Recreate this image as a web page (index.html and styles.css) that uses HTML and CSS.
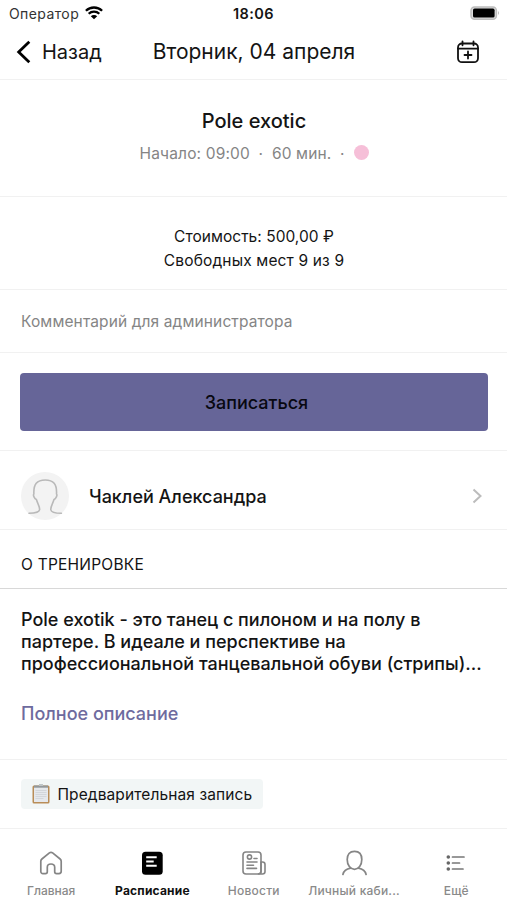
FILE: index.html
```html
<!DOCTYPE html>
<html lang="ru">
<head>
<meta charset="utf-8">
<title>Pole exotic</title>
<link rel="stylesheet" href="styles.css">
</head>
<body>
<div class="status">
  <div class="carrier"><span>Оператор</span>
    <svg width="18" height="14" viewBox="0 0 18 14"><path d="M.9 4.8a11.6 11.6 0 0 1 16.2 0M3.7 7.7a7.6 7.6 0 0 1 10.6 0" fill="none" stroke="#000" stroke-width="2.3"/><path d="M5.8 10.2a4.6 4.6 0 0 1 6.4 0L9 13.3z"/></svg>
  </div>
  <div class="time">18:06</div>
  <div class="battery">
    <svg width="30" height="14" viewBox="0 0 30 14"><rect x="1" y="1" width="25.400" height="12.200" rx="3.500" fill="#ddd" stroke="#bdbdbd" stroke-width="1.500"/><rect x="3" y="2.600" width="21.600" height="9" rx="1.600"/><path d="M28 4.700q1.800 2.300 0 4.600z" fill="#aaa"/></svg>
  </div>
</div>
<header class="nav">
  <div class="back"><svg width="16" height="24" viewBox="0 0 16 24"><path d="M13.300 1.800 2.700 12l10.600 10.200" fill="none" stroke="#000" stroke-width="2.800"/></svg><span>Назад</span></div>
  <h1>Вторник, 04 апреля</h1>
  <div class="calendar"><svg width="24" height="24" viewBox="0 0 24 24" fill="none" stroke="#111" stroke-width="1.800" stroke-linecap="round"><rect x="2" y="3.500" width="20" height="18.700" rx="4"/><path d="M2 8.700h20M6.500 1.300v4M17.500 1.300v4M12 11.500v7M8.500 15h7"/></svg></div>
</header>
<section class="summary">
  <h2>Pole exotic</h2>
  <div class="meta"><span class="start">Начало: 09:00</span><i>·</i><span>60 мин.</span><i>·</i><b class="dot"></b></div>
</section>
<section class="price"><div class="cost">Стоимость: 500,00 ₽</div><div class="seats">Свободных мест 9 из 9</div></section>
<section class="comment">Комментарий для администратора</section>
<section class="action"><div class="button">Записаться</div></section>
<section class="trainer">
  <div class="avatar"><svg width="48" height="48" viewBox="0 0 48 48" fill="none" stroke="#b9b9b9" stroke-width="1.600" stroke-linecap="round"><path d="M8 41.300c6-.1 10.300-1 10.600-3.600.3-3.200-1.800-5.500-3.200-10.200-1.900-.7-3.700-4.500-2.500-5.500C12.300 12 16 8 24.200 8s11.900 4 11.300 14c1.200 1-.6 4.800-2.500 5.500-1.400 4.700-3.500 7-3.200 10.200.3 2.600 4.600 3.500 10.600 3.600"/></svg></div>
  <span>Чаклей Александра</span>
  <svg class="chevron" width="11" height="16" viewBox="0 0 11 16"><path d="M1.500 1.500 8.500 8l-7 6.500" fill="none" stroke="#bcbcbc" stroke-width="2"/></svg>
</section>
<section class="heading">О ТРЕНИРОВКЕ</section>
<section class="about">
  <p><span>Pole exotik - это танец с пилоном и на полу в</span><span>партере. В идеале и перспективе на</span><span>профессиональной танцевальной обуви (стрипы)...</span></p>
  <a>Полное описание</a>
</section>
<section class="tags"><div class="tag">
  <svg width="20" height="20" viewBox="0 0 20 20"><rect x="1.500" y="1.500" width="17" height="18" rx="1.500" fill="#b98d58"/><path d="M3 2.500h14v15.500H3z" fill="#e5e8ec"/><path d="M4.500 6.500h11M4.500 8.500h11M4.500 10.500h11M4.500 12.500h11M4.500 14.500h8" stroke="#ced1d6" stroke-width=".8"/><path d="M3 1.500h14v2.200H3z" fill="#93989b"/><path d="M8 0h4v2H8z" fill="#bfc5c7"/></svg>
  <span>Предварительная запись</span></div></section>
<nav class="tabs">
  <div class="tab"><svg width="26" height="26" viewBox="0 0 26 26" fill="none" stroke="#858585" stroke-width="1.700" stroke-linejoin="round"><path d="M2.800 11.300c0-1 .4-1.700 1.100-2.300l7.500-6.100c1-.8 2.200-.8 3.200 0L22.100 9c.7.600 1.100 1.300 1.100 2.300v10c0 1.500-.8 2.300-2.200 2.300h-2.400c-1.200 0-1.900-.7-1.900-1.900v-4.500c0-2-1.300-3.200-3.700-3.200s-3.700 1.200-3.700 3.200v4.500c0 1.200-.7 1.900-1.900 1.900H5c-1.400 0-2.200-.8-2.200-2.300z"/></svg><span class="t1">Главная</span></div>
  <div class="tab active"><svg width="26" height="26" viewBox="0 0 26 26"><rect x="3" y="1.700" width="20.700" height="23" rx="3.500"/><path d="M7.200 7.200h10.500M7.200 11.500h7.500M7.200 15.700h10.500" stroke="#fff" stroke-width="1.900"/></svg><span class="t2">Расписание</span></div>
  <div class="tab"><svg width="26" height="26" viewBox="0 0 26 26" fill="none" stroke="#858585" stroke-width="1.600" stroke-linecap="round"><rect x="2" y="2" width="18" height="22" rx="3"/><path d="M20 12h1.500q2.500 0 2.500 2.500v7q0 2.500-2.500 2.500H17.500M20 12v9.500q0 2.500-2.500 2.500M6 12h10M6 15.200h6.500M6 18.400h9.500M13 8.500h3"/><circle cx="8.500" cy="7" r="2.100"/></svg><span class="t3">Новости</span></div>
  <div class="tab"><svg width="26" height="26" viewBox="0 0 26 26" fill="none" stroke="#858585" stroke-width="1.700" stroke-linecap="round"><path d="M12.500 1.300c4.800 0 7.300 3 7.300 8.200 0 5.700-3.200 9.800-7.300 9.800s-7.300-4.100-7.300-9.800c0-5.200 2.500-8.200 7.300-8.200zM.900 24.500c.7-4 3.600-5.600 7.800-6.400M24.100 24.500c-.7-4-3.600-5.600-7.800-6.400"/></svg><span class="t4">Личный каби...</span></div>
  <div class="tab"><svg width="26" height="26" viewBox="0 0 26 26" stroke="#777" stroke-width="1.700" stroke-linecap="round"><path d="M9.500 7h11.500M9.500 13h7M9.500 19h10.500"/><g fill="#666" stroke="none"><circle cx="5.300" cy="7" r="1.800"/><circle cx="5.300" cy="13" r="1.800"/><circle cx="5.300" cy="19" r="1.800"/></g></svg><span class="t5">Ещё</span></div>
</nav>
</body>
</html>
```
FILE: styles.css
```css
* { box-sizing: border-box; }
body { margin: 0; width: 507px; height: 900px; overflow: hidden; background: #fff; color: #141414; font-family: Inter, sans-serif; display: flex; flex-direction: column; }
h1, h2, p { margin: 0; font-weight: 400; }
svg { display: block; flex: none; }
span, h1, a { white-space: nowrap; }
.status { height: 28px; flex: none; display: grid; grid-template-columns: 1fr auto 1fr; align-items: center; padding: 0 7px 2px 7px; }
.carrier { display: flex; align-items: center; gap: 6px; padding-left: 2px; font-size: 14px; letter-spacing: .4px; color: #333; }
.time { font-size: 14.500px; font-weight: 600; letter-spacing: .4px; }
.battery { justify-self: end; }
.nav { height: 52px; flex: none; display: grid; grid-template-columns: 1fr auto 1fr; align-items: center; padding: 0 16px 3px; border-bottom: 1px solid #f1f1f1; }
.back { display: flex; align-items: center; gap: 10px; font-size: 20px; }
h1 { font-size: 21px; line-height: 24px; padding-left: 1px; }
.calendar { justify-self: end; margin-right: 11px; }
section { flex: none; border-bottom: 1px solid #f1f1f1; }
.summary { height: 117px; padding: 28px 0 0 1px; text-align: center; }
h2 { font-size: 20px; line-height: 26px; font-weight: 500; }
.meta { display: flex; justify-content: center; align-items: center; margin-top: 9px; font-size: 15.500px; line-height: 20px; color: #858585; letter-spacing: .15px; }
.meta span { padding-top: 1px; }
.meta i { font-style: normal; width: 22px; text-align: center; }
.dot { width: 15px; height: 15px; border-radius: 50%; background: #f6bfd8; margin: -2px -1px 0 1px; }
.price { height: 93px; padding: 28px 0 0 1px; text-align: center; font-size: 15.500px; line-height: 24px; }
.cost { letter-spacing: .03px; }
.seats { letter-spacing: .15px; }
.comment { height: 63px; padding-left: 21px; line-height: 64px; font-size: 15.500px; letter-spacing: .12px; color: #858585; }
.action { height: 98px; padding: 20px 19.500px 19px 20.400px; }
.button { height: 58px; border-radius: 4px; background: #666598; color: #080810; text-align: center; line-height: 59px; padding: 0 1px 0 6px; font-size: 18px; font-weight: 500; }
.trainer { height: 79px; display: flex; align-items: center; gap: 20px; padding: 12px 24px 0 21px; font-size: 18px; font-weight: 500; }
.avatar { width: 48px; height: 48px; border-radius: 50%; background: #f3f3f3; }
.chevron { margin-left: auto; }
.heading { height: 59px; padding: 5px 0 0 21px; line-height: 60px; font-size: 15.500px; letter-spacing: .23px; border-bottom-color: #d8d8d8; }
.about { height: 171px; padding: 20px 0 0 21px; font-size: 18px; line-height: 22px; font-weight: 500; }
.about p span { display: block; font-weight: 500; }
.about a { display: block; margin-top: 28px; color: #6e6b9e; }
.tags { height: 69px; padding: 19px 20px; }
.tag { display: inline-flex; align-items: center; gap: 7px; height: 30px; width: 242px; padding: 0 10px; margin-left: .5px; border-radius: 4px; background: #f2f6f6; font-size: 15.500px; letter-spacing: .1px; }
.tabs { flex: 1; display: grid; grid-template-columns: repeat(5, 1fr); padding: 21px 0 0 .5px; }
.tab { display: flex; flex-direction: column; align-items: center; color: #8a8a8a; font-size: 12px; line-height: 16px; gap: 7px; font-weight: 500; letter-spacing: .25px; }
.active { color: #111; font-weight: 700; letter-spacing: .2px; }
.t1 { letter-spacing: 0; }
.t4 { margin-left: -2px; letter-spacing: .2px; }
```
